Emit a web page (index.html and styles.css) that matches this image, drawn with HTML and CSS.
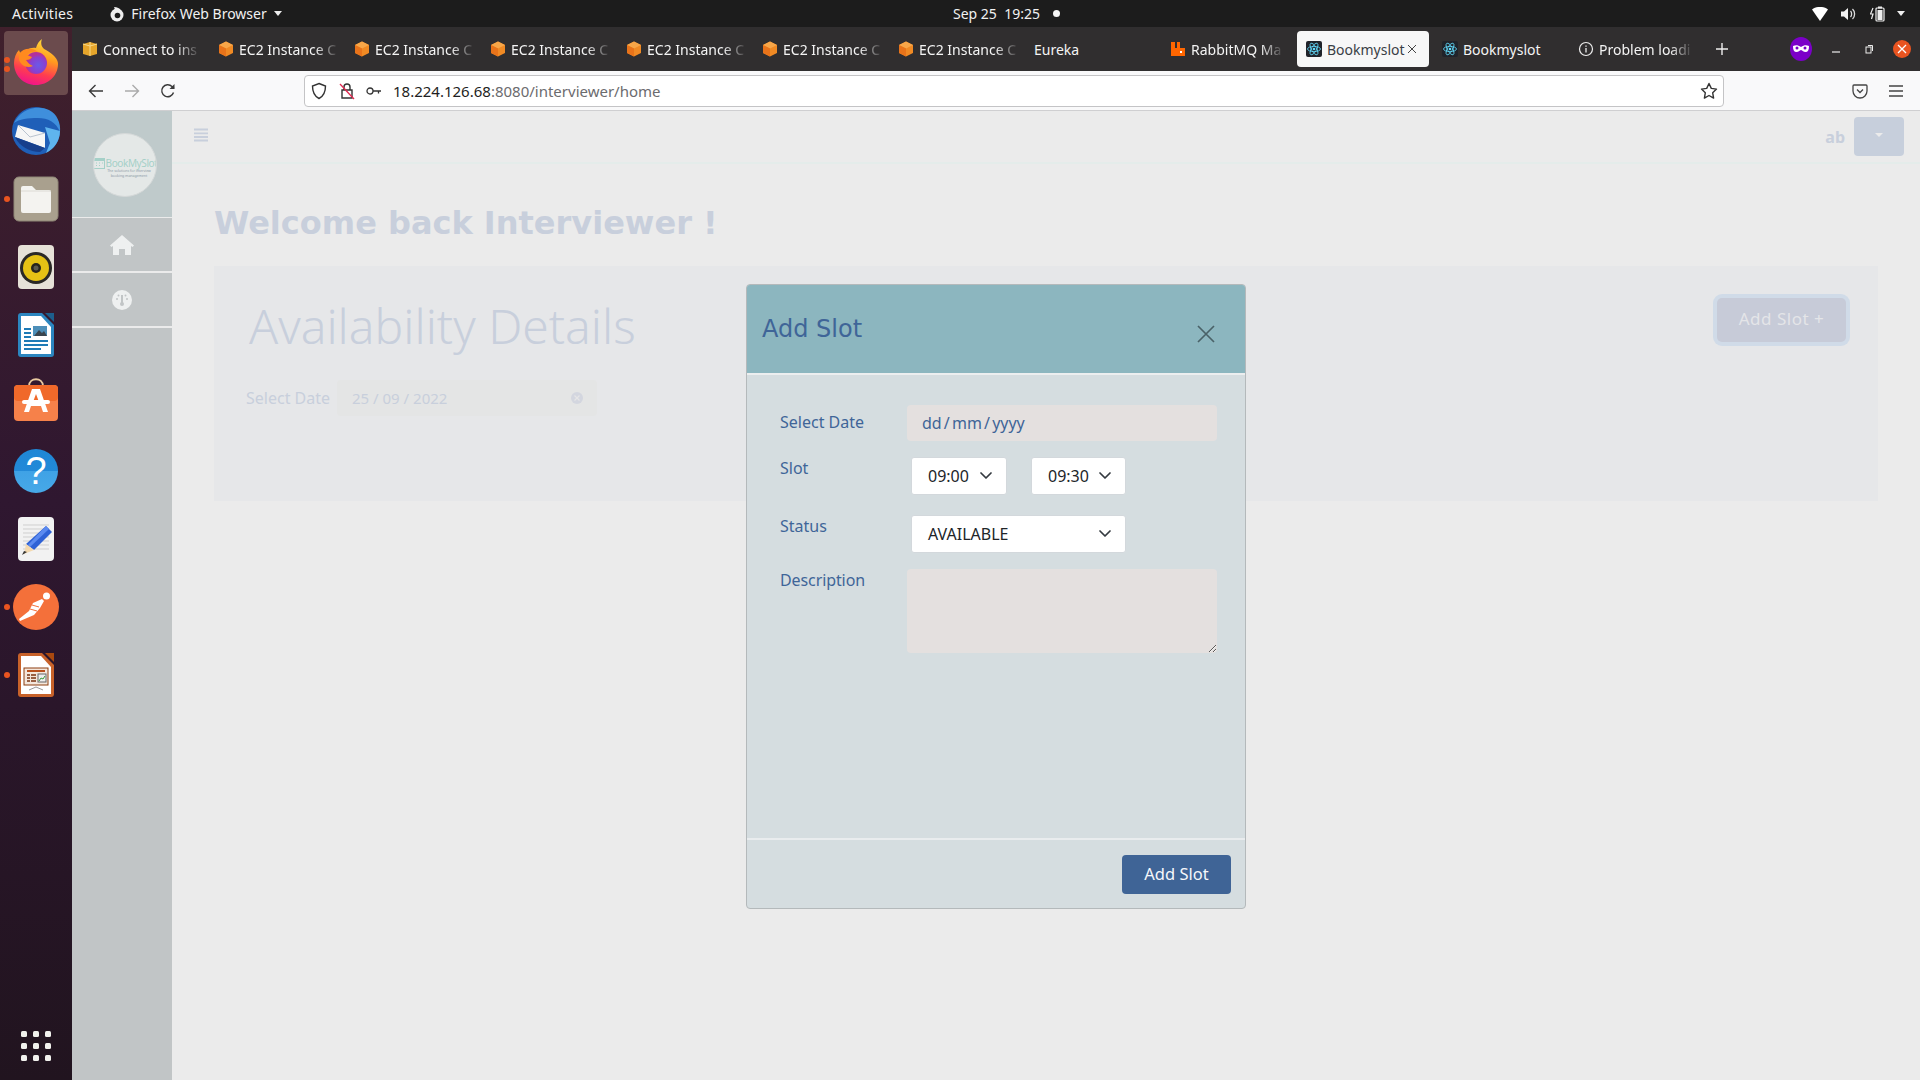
FILE: index.html
```html
<!DOCTYPE html>
<html lang="en">
<head>
<meta charset="utf-8">
<title>Bookmyslot</title>
<link rel="stylesheet" href="styles.css">
</head>
<body>
<svg class="defs" width="0" height="0">
  <defs>
    <g id="cube"><path d="M8 0.5 15 4v8l-7 3.5L1 12V4z" fill="#f08a24"/><path d="M8 0.5 15 4 8 7.5 1 4z" fill="#f7a648"/><path d="M8 7.5V15.5L1 12V4z" fill="#e8731a"/></g>
    <g id="react"><rect width="16" height="16" rx="2" fill="#20232a"/><g fill="none" stroke="#61dafb" stroke-width=".8"><ellipse cx="8" cy="8" rx="6.5" ry="2.6"/><ellipse cx="8" cy="8" rx="6.5" ry="2.6" transform="rotate(60 8 8)"/><ellipse cx="8" cy="8" rx="6.5" ry="2.6" transform="rotate(120 8 8)"/></g><circle cx="8" cy="8" r="1.3" fill="#61dafb"/></g>
    <path id="chev" d="M1 1l5 5 5-5" fill="none" stroke="#343a40" stroke-width="1.7" stroke-linecap="round" stroke-linejoin="round"/>
  </defs>
</svg>
<div class="screen">
  <header class="topbar">
    <span class="activities">Activities</span>
    <span class="appmenu">
      <svg width="16" height="16" viewBox="0 0 16 16"><circle cx="8" cy="9" r="6.5" fill="#eee"/><circle cx="8.5" cy="9.5" r="2.8" fill="#1c1c1c"/><path d="M5 1c3 0 6 1 7 4L7 6z" fill="#eee"/></svg>
      Firefox Web Browser
      <i class="caret"></i>
    </span>
    <span class="clock">Sep 25&nbsp; 19:25<i class="clockdot"></i></span>
    <span class="tray">
      <svg width="16" height="14" viewBox="0 0 16 14"><path d="M0 2.500C4.500-1 11.500-1 16 2.500L8 14z" fill="#fff"/></svg>
      <svg width="16" height="14" viewBox="0 0 16 14"><path d="M0 4.500h3L7 1v12L3 9.500H0z" fill="#f2f2f2"/><path d="M9.500 4c1.500 1.500 1.500 4.500 0 6M11.500 2c2.800 2.500 2.800 7.500 0 10" fill="none" stroke="#ddd" stroke-width="1.300"/></svg>
      <svg width="16" height="16" viewBox="0 0 16 16"><path d="M3 2 0.500 8H3L1.500 13" fill="none" stroke="#eee" stroke-width="1.200"/><rect x="6" y="2" width="8" height="13" rx="1" fill="none" stroke="#eee" stroke-width="1.200"/><rect x="8" y="0.500" width="4" height="2" fill="#eee"/><rect x="7.500" y="4" width="5" height="10" fill="#eee"/></svg>
      <i class="caret tray-caret"></i>
    </span>
  </header>
  <div class="desktop">
    <nav class="dock">
      <div class="dock-item dock-active">
        <i class="run run-a"></i><i class="run run-b"></i>
        <svg width="64" height="64" viewBox="0 0 64 64"><defs><linearGradient id="ffa" x1="0.700" y1="0" x2="0.400" y2="1"><stop offset="0" stop-color="#ffe03d"/><stop offset=".4" stop-color="#ff9a1f"/><stop offset=".72" stop-color="#ff3d4f"/><stop offset="1" stop-color="#f0148a"/></linearGradient><radialGradient id="ffb" cx=".6" cy=".6"><stop offset="0" stop-color="#6a5ae8"/><stop offset=".7" stop-color="#8a3fd0"/><stop offset="1" stop-color="#b5309a"/></radialGradient></defs><path d="M38 8C36 13 38 17 42 19 50 24 54 28 54 33 54 45 44 54 32 54 19 54 10 44 10 32 10 27 12 22 15 19 16 22 17 23 18 24 21 19 26 16 32 17 33 13 35 10 38 8z" fill="url(#ffa)"/><circle cx="32" cy="32" r="11" fill="url(#ffb)"/><path d="M15 23C19 17 28 16 34 21 29 20 25 21 23 24L28 26C27 28 25 29 22 29 24 32 26 34 29 35 23 38 16 34 15 28z" fill="#ff8a1f"/></svg>
      </div>
      <div class="dock-item">
        <svg width="64" height="64" viewBox="0 0 64 64"><circle cx="32" cy="32" r="24" fill="#1f5fb8"/><path d="M10 24C16 11 32 5 45 11 53 15 57 24 56 33 52 23 44 19 34 19 24 19 15 20 10 24z" fill="#3f8fdc"/><path d="M41 28 56 32C56 42 50 50 42 54L46 44z" fill="#5fb4ee"/><path d="M14 26 41 34V49L11 38z" fill="#f6f6f6"/><path d="M14 26 26 38 41 34" fill="none" stroke="#b9c3cf" stroke-width="1"/><path d="M11 38 41 49 36 53C26 53 15 47 11 38z" fill="#173f8c"/></svg>
      </div>
      <div class="dock-item">
        <i class="run run-one"></i>
        <svg width="64" height="64" viewBox="0 0 64 64"><rect x="10" y="10" width="44" height="44" rx="5" fill="#a9a08e" stroke="#8f8777"/><path d="M17 21a2 2 0 0 1 2-2h9l4 4h13a2 2 0 0 1 2 2v19a2 2 0 0 1-2 2H19a2 2 0 0 1-2-2z" fill="#f4f3f0"/><path d="M17 24h30" stroke="#dcdad4"/></svg>
      </div>
      <div class="dock-item">
        <svg width="64" height="64" viewBox="0 0 64 64"><rect x="14" y="10" width="36" height="44" rx="4" fill="#e6e2d8"/><circle cx="32" cy="33" r="16" fill="#2a2926"/><circle cx="32" cy="33" r="13" fill="#e5c215"/><circle cx="32" cy="33" r="5" fill="#26241d"/><circle cx="32" cy="33" r="2.500" fill="#5b5a50"/></svg>
      </div>
      <div class="dock-item">
        <svg width="64" height="64" viewBox="0 0 64 64"><path d="M41 10h9v9z" fill="#1d5e8c"/><path d="M17 10h21l12 12v29a3 3 0 0 1-3 3H17a3 3 0 0 1-3-3V13a3 3 0 0 1 3-3z" fill="#2b86c0"/><path d="M17 13h20l10 11v27H17z" fill="#fff"/><path d="M20 26h7M20 30h7M20 34h7M20 38h24M20 42h24M20 46h17" stroke="#1f7bb6" stroke-width="2"/><rect x="29" y="23" width="14" height="10" fill="#4d8fb9"/><path d="M30 33l5-6 3 3 2-2 3 5z" fill="#39454f"/></svg>
      </div>
      <div class="dock-item">
        <svg width="64" height="64" viewBox="0 0 64 64"><path d="M25 15c0-9 14-9 14 0" fill="none" stroke="#e8c9a0" stroke-width="1.800"/><rect x="10" y="14" width="44" height="36" rx="4" fill="#f6814a"/><rect x="10" y="14" width="44" height="16" rx="4" fill="#f0692a"/><path d="M28 18h8l8 23h-5l-2-6H27l-2 6h-5zm4 5-3 8h6z" fill="#fff"/><rect x="18" y="29" width="28" height="4" rx="2" fill="#fff"/></svg>
      </div>
      <div class="dock-item">
        <svg width="64" height="64" viewBox="0 0 64 64"><defs><linearGradient id="hp" x1="0" y1="0" x2="0" y2="1"><stop offset="0" stop-color="#1f87d6"/><stop offset=".5" stop-color="#2289d8"/><stop offset=".5" stop-color="#3fa2e6"/><stop offset="1" stop-color="#47a9e8"/></linearGradient></defs><circle cx="32" cy="32" r="22" fill="url(#hp)"/><text class="help-q" x="32" y="45" text-anchor="middle">?</text></svg>
      </div>
      <div class="dock-item">
        <svg width="64" height="64" viewBox="0 0 64 64"><rect x="14" y="10" width="36" height="44" rx="4" fill="#f2f2f2"/><path d="M19 18h26M19 22h26M19 26h26M19 30h26M19 34h26M19 38h26M19 42h26" stroke="#cfcfcf"/><path d="M42 19l6 6-18 18-8-6z" fill="#2f62d6"/><path d="M42 19l3 3-19 18-2-2z" fill="#5b8af0"/><path d="M22 37l8 6-10 4z" fill="#f3d9b0"/><path d="M20 44l3 1-5 3z" fill="#333"/></svg>
      </div>
      <div class="dock-item">
        <i class="run run-one"></i>
        <svg width="64" height="64" viewBox="0 0 64 64"><circle cx="32" cy="32" r="23" fill="#f4703a"/><circle cx="42.500" cy="21" r="3.500" fill="#fff"/><path d="M38 24 29 28 25 36 15 44l1 2 14-6 6-7 4-7z" fill="#fff"/><path d="M28 30l7 2M26 34l7 2" stroke="#f4703a"/></svg>
      </div>
      <div class="dock-item">
        <i class="run run-one"></i>
        <svg width="64" height="64" viewBox="0 0 64 64"><path d="M41 10h9v9z" fill="#a9490f"/><path d="M17 10h21l12 12v29a3 3 0 0 1-3 3H17a3 3 0 0 1-3-3V13a3 3 0 0 1 3-3z" fill="#c8622a"/><path d="M17 13h20l10 11v27H17z" fill="#fff"/><rect x="20" y="25" width="24" height="17" fill="#f4e7dc" stroke="#8d3f10"/><path d="M23 28h18" stroke="#b8501c" stroke-width="2"/><path d="M23 32h3M23 35h3M23 38h3M27 32h5M27 35h5M27 38h5" stroke="#7a3410" stroke-width="1.500"/><rect x="34" y="31" width="8" height="8" fill="#eee" stroke="#666"/><path d="M35 38l2-3 2 1 2-3" stroke="#3a9b3a" fill="none"/><path d="M25 47l7-3 7 3" fill="none" stroke="#999"/></svg>
      </div>
      <div class="apps-grid"><i></i><i></i><i></i><i></i><i></i><i></i><i></i><i></i><i></i></div>
    </nav>
    <main class="window">
      <div class="tabstrip">
        <div class="tab"><svg width="16" height="16" viewBox="0 0 16 16"><path d="M8 1 15 3v10l-7 2-7-2V3z" fill="#e5a52b"/><path d="M8 1v14" stroke="#f7d98a"/><path d="M1 3l7 2 7-2" fill="none" stroke="#f7d98a"/></svg><span class="tab-label">Connect to ins</span></div>
        <div class="tab"><svg width="16" height="16" viewBox="0 0 16 16"><use href="#cube"/></svg><span class="tab-label">EC2 Instance C</span></div>
        <div class="tab"><svg width="16" height="16" viewBox="0 0 16 16"><use href="#cube"/></svg><span class="tab-label">EC2 Instance C</span></div>
        <div class="tab"><svg width="16" height="16" viewBox="0 0 16 16"><use href="#cube"/></svg><span class="tab-label">EC2 Instance C</span></div>
        <div class="tab"><svg width="16" height="16" viewBox="0 0 16 16"><use href="#cube"/></svg><span class="tab-label">EC2 Instance C</span></div>
        <div class="tab"><svg width="16" height="16" viewBox="0 0 16 16"><use href="#cube"/></svg><span class="tab-label">EC2 Instance C</span></div>
        <div class="tab"><svg width="16" height="16" viewBox="0 0 16 16"><use href="#cube"/></svg><span class="tab-label">EC2 Instance C</span></div>
        <div class="tab"><span class="tab-plain">Eureka</span></div>
        <div class="tab"><svg width="16" height="16" viewBox="0 0 16 16"><path d="M1 1h4v6h2V1h3v6h5v8H1z" fill="#f60"/><rect x="10" y="10" width="2" height="2" fill="#fff"/></svg><span class="tab-label">RabbitMQ Ma</span></div>
        <div class="tab tab-active"><svg width="16" height="16" viewBox="0 0 16 16"><use href="#react"/></svg><span class="tab-plain">Bookmyslot</span><svg class="tab-x" width="10" height="10" viewBox="0 0 10 10"><path d="M1 1l8 8M9 1l-8 8" stroke="#444" stroke-width="1"/></svg></div>
        <div class="tab"><svg width="16" height="16" viewBox="0 0 16 16"><use href="#react"/></svg><span class="tab-plain">Bookmyslot</span></div>
        <div class="tab"><svg width="16" height="16" viewBox="0 0 16 16"><circle cx="8" cy="8" r="6.500" fill="none" stroke="#eee" stroke-width="1.200"/><path d="M8 7v4.500M8 4.500v1.300" stroke="#eee" stroke-width="1.300"/></svg><span class="tab-label">Problem loadi</span></div>
        <svg class="newtab" width="14" height="14" viewBox="0 0 14 14"><path d="M7 1v12M1 7h12" stroke="#eee" stroke-width="1.400"/></svg>
        <span class="win-controls">
          <svg width="22" height="24" viewBox="0 0 22 24"><ellipse cx="11" cy="12" rx="11" ry="12" fill="#7b00c8"/><path d="M3 9c3-1.500 5-1 8 1 3-2 5-2.500 8-1 0 4-1 6-3.500 6-2 0-3-1.500-4.500-2-1.500.5-2.500 2-4.500 2C4 15 3 13 3 9z" fill="#fff"/><circle cx="7" cy="11" r="1.500" fill="#7b00c8"/><circle cx="15" cy="11" r="1.500" fill="#7b00c8"/></svg>
          <svg class="wc-min" width="10" height="10" viewBox="0 0 10 10"><path d="M1 8h8" stroke="#eee" stroke-width="1.200"/></svg>
          <svg class="wc-max" width="10" height="10" viewBox="0 0 10 10"><rect x="2" y="3" width="5" height="6" fill="none" stroke="#eee"/><path d="M4 1.500h4.500v5.500" fill="none" stroke="#eee"/></svg>
          <span class="wc-close"><svg width="10" height="10" viewBox="0 0 10 10"><path d="M1 1l8 8M9 1l-8 8" stroke="#fff" stroke-width="1.300"/></svg></span>
        </span>
      </div>
      <div class="navbar">
        <span class="nav-btn"><svg width="16" height="16" viewBox="0 0 16 16"><path d="M15 8H1.500M7.500 2 1.500 8l6 6" fill="none" stroke="#3a3a3a" stroke-width="1.400"/></svg></span>
        <span class="nav-btn"><svg width="16" height="16" viewBox="0 0 16 16"><path d="M1 8h13.500M8.500 2l6 6-6 6" fill="none" stroke="#aaa" stroke-width="1.400"/></svg></span>
        <span class="nav-btn"><svg width="16" height="16" viewBox="0 0 16 16"><path d="M13.500 9.500A6 6 0 1 1 12 3.500L14 5.500" fill="none" stroke="#3a3a3a" stroke-width="1.400"/><path d="M14.500 1v5h-5z" fill="#3a3a3a"/></svg></span>
        <div class="urlbar">
          <svg class="url-shield" width="16" height="18" viewBox="0 0 16 18"><path d="M8 1.500 14.500 4c0 6-1.500 10-6.500 12.500C3 14 1.500 10 1.500 4z" fill="none" stroke="#333" stroke-width="1.400"/></svg>
          <svg class="url-lock" width="16" height="18" viewBox="0 0 16 18"><path d="M3 8h10v8H3zM5 8V5a3 3 0 0 1 6 0v3" fill="none" stroke="#333" stroke-width="1.400"/><path d="M1 2l14 15" stroke="#e22850" stroke-width="1.300"/></svg>
          <svg class="url-key" width="16" height="10" viewBox="0 0 16 10"><circle cx="4" cy="5" r="3" fill="none" stroke="#333" stroke-width="1.300"/><path d="M7 5h8M12.500 5v2.500" stroke="#333" stroke-width="1.300"/></svg>
          <span class="url-text"><b>18.224.126.68</b>:8080/interviewer/home</span>
          <svg class="url-star" width="18" height="18" viewBox="0 0 18 18"><path d="M9 1.500l2.300 4.900 5.200.7-3.800 3.700.9 5.300L9 13.500l-4.600 2.600.9-5.300L1.500 7.100l5.200-.7z" fill="none" stroke="#333" stroke-width="1.400" stroke-linejoin="round"/></svg>
        </div>
        <svg class="nav-pocket" width="16" height="16" viewBox="0 0 16 16"><path d="M2 2h12a1 1 0 0 1 1 1v5a7 7 0 0 1-14 0V3a1 1 0 0 1 1-1z" fill="none" stroke="#444" stroke-width="1.300"/><path d="M5 6.500l3 3 3-3" fill="none" stroke="#444" stroke-width="1.300"/></svg>
        <svg class="nav-menu" width="14" height="12" viewBox="0 0 14 12"><path d="M0 1h14M0 6h14M0 11h14" stroke="#444" stroke-width="1.300"/></svg>
      </div>
      <div class="page">
        <aside class="sidebar">
          <div class="side-logo">
            <div class="logo-circle">
              <span class="logo-row">
                <svg width="12" height="11" viewBox="0 0 12 11"><rect x=".5" y=".5" width="11" height="10" fill="none" stroke="#a5d0c8"/><rect x="1" y="1" width="10" height="2" fill="#a5d0c8"/><path d="M3 5h1M6 5h1M9 5h1M3 7.500h1M6 7.500h1" stroke="#a5d0c8"/></svg>
                <span class="logo-name">BookMySlot</span>
              </span>
              <span class="logo-sub">The solutions for interview<br>booking management</span>
            </div>
          </div>
          <div class="side-item"><svg width="24" height="20" viewBox="0 0 24 20"><path d="M12 0 24 10.500l-1.500 1.500L21 11v9h-6v-6H9v6H3v-9l-1.500 1L0 10.500z" fill="#eef0f0"/></svg></div>
          <div class="side-item"><svg width="20" height="20" viewBox="0 0 20 20"><circle cx="10" cy="10" r="10" fill="#eef0f0"/><path d="M10 5v8" stroke="#c1c5c6" stroke-width="2"/><circle cx="10" cy="14" r="2" fill="#c1c5c6"/><circle cx="5" cy="9" r="1" fill="#c1c5c6"/><circle cx="15" cy="9" r="1" fill="#c1c5c6"/><circle cx="6.500" cy="5.500" r="1" fill="#c1c5c6"/><circle cx="13.500" cy="5.500" r="1" fill="#c1c5c6"/></svg></div>
        </aside>
        <section class="content">
          <div class="appbar">
            <svg class="burger" width="14" height="14" viewBox="0 0 14 14"><path d="M0 1.500h14M0 5.300h14M0 9h14M0 12.500h14" stroke="#c8cfdc" stroke-width="1.800"/></svg>
            <span class="user">ab</span>
            <span class="user-btn"><i></i></span>
          </div>
          <div class="main-body">
            <h2 class="welcome">Welcome back Interviewer !</h2>
            <div class="card">
              <div class="card-left">
                <h1 class="card-title">Availability Details</h1>
                <div class="filter">
                  <span class="filter-label">Select Date</span>
                  <span class="filter-input">25 / 09 / 2022
                    <svg width="12" height="12" viewBox="0 0 12 12"><circle cx="6" cy="6" r="6" fill="#d3d6df"/><path d="M3.500 3.500l5 5M8.500 3.500l-5 5" stroke="#e5e5e6" stroke-width="1.300"/></svg>
                  </span>
                </div>
              </div>
              <button class="add-btn" type="button">Add Slot +</button>
            </div>
          </div>
        </section>
        <div class="modal">
          <div class="modal-head">
            <h3 class="modal-title">Add Slot</h3>
            <svg class="modal-close" width="18" height="18" viewBox="0 0 18 18"><path d="M1 1l16 16M17 1 1 17" stroke="#4a6268" stroke-width="1.700"/></svg>
          </div>
          <div class="modal-body">
            <div class="row row-date">
              <span class="label">Select Date</span>
              <span class="date-field">dd / mm / yyyy</span>
            </div>
            <div class="row row-slot">
              <span class="label">Slot</span>
              <span class="select select-time">09:00<svg width="12" height="7" viewBox="0 0 12 7"><use href="#chev"/></svg></span>
              <span class="select select-time select-end">09:30<svg width="12" height="7" viewBox="0 0 12 7"><use href="#chev"/></svg></span>
            </div>
            <div class="row row-status">
              <span class="label">Status</span>
              <span class="select select-wide">AVAILABLE<svg width="12" height="7" viewBox="0 0 12 7"><use href="#chev"/></svg></span>
            </div>
            <div class="row row-desc">
              <span class="label">Description</span>
              <textarea class="desc" aria-label="Description"></textarea>
            </div>
          </div>
          <div class="modal-foot"><button class="modal-submit" type="button">Add Slot</button></div>
        </div>
      </div>
    </main>
  </div>
</div>
</body>
</html>
```
FILE: styles.css
```css
* { box-sizing: border-box; }
html, body { margin: 0; height: 100%; overflow: hidden; }
body { font-family: "Noto Sans", "Open Sans", sans-serif; background: #ebebeb; }
i { display: block; font-style: normal; }
.defs { position: absolute; }
.screen { display: flex; flex-direction: column; width: 1920px; height: 1080px; }

.topbar { height: 27px; background: #1c1c1c; color: #f1f1f1; font-size: 14px; display: flex; align-items: center; position: relative; flex: none; }
.activities { margin-left: 12px; letter-spacing: 0.300px; }
.appmenu { margin-left: 36px; display: flex; align-items: center; gap: 6px; }
.caret { width: 0; height: 0; border: 4.500px solid transparent; border-top: 5px solid #eee; border-bottom: 0; margin-left: 1px; }
.clock { position: absolute; left: 953px; display: flex; align-items: center; }
.clockdot { width: 7px; height: 7px; border-radius: 50%; background: #f5f5f5; margin-left: 13px; }
.tray { margin-left: auto; margin-right: 15px; display: flex; align-items: center; gap: 13px; }
.tray-caret { margin-left: -2px; }

.desktop { flex: 1; display: flex; min-height: 0; }
.dock { width: 72px; flex: none; display: flex; flex-direction: column; padding-top: 2px; background: linear-gradient(180deg, #40202c 0%, #2f1730 45%, #21141f 100%); }
.dock-item { height: 68px; display: flex; align-items: center; justify-content: center; position: relative; flex: none; }
.dock-active::before { content: ""; position: absolute; left: 4px; top: 2px; width: 64px; height: 64px; border-radius: 4px; background: #6b4b4d; }
.dock-item svg { position: relative; }
.help-q { font-family: "Liberation Sans", sans-serif; font-size: 38px; fill: #fff; }
.run { position: absolute; left: 4px; width: 6px; height: 6px; border-radius: 50%; background: #e95420; z-index: 1; }
.run-a { top: 28px; }
.run-b { top: 37px; }
.run-one { top: 31px; }
.apps-grid { margin-top: auto; margin-bottom: 19px; margin-left: 21px; display: grid; grid-template-columns: repeat(3, 6px); gap: 6px; }
.apps-grid i { width: 6px; height: 6px; border-radius: 1.500px; background: #f1f1ed; }

.window { flex: 1; min-width: 0; display: flex; flex-direction: column; }
.tabstrip { height: 44px; flex: none; background: #302e2f; display: flex; align-items: center; position: relative; }
.tab { width: 136px; height: 36px; flex: none; display: flex; align-items: center; gap: 5px; padding-left: 10px; color: #f4f4f4; font-size: 14px; white-space: nowrap; }
.tab svg { flex: none; }
.tab-label { -webkit-mask-image: linear-gradient(90deg, #000 78%, rgba(0, 0, 0, 0.150) 100%); mask-image: linear-gradient(90deg, #000 78%, rgba(0, 0, 0, 0.150) 100%); }
.tab-plain { flex: none; }
.tab-active { width: 132px; margin: 0 2px 0 1px; padding-left: 9px; background: #f7f7f7; color: #3a3f46; border-radius: 4px; }
.tab-x { margin-left: -3px; }
.tab-active + .tab { margin-left: 1px; }
.newtab { margin-left: 11px; flex: none; }
.win-controls { margin-left: auto; display: flex; align-items: center; }
.win-controls > svg:first-child { margin-right: 19px; }
.wc-min { margin-right: 23px; }
.wc-max { margin-right: 19px; }
.wc-close { width: 18px; height: 18px; border-radius: 50%; background: #e95420; display: flex; align-items: center; justify-content: center; margin-right: 9px; }

.navbar { height: 40px; flex: none; background: #f9f9fa; border-bottom: 1px solid #cfcfd1; display: flex; align-items: center; padding-left: 6px; position: relative; }
.nav-btn { width: 36px; display: flex; justify-content: center; flex: none; }
.urlbar { margin-left: 118px; width: 1420px; height: 32px; flex: none; background: #fff; border: 1px solid #c4c4c6; border-radius: 4px; display: flex; align-items: center; padding-left: 6px; }
.url-lock { margin-left: 12px; }
.url-key { margin-left: 11px; }
.url-text { margin-left: 11px; font-size: 15px; color: #6b6b6e; }
.url-text b { font-weight: 400; color: #1e1e22; }
.url-star { margin-left: auto; margin-right: 5px; }
.nav-pocket { margin-left: 128px; }
.nav-menu { margin-left: 21px; }

.page { flex: 1; min-height: 0; display: flex; position: relative; }
.sidebar { width: 100px; flex: none; background: #c1c5c6; }
.side-logo { height: 107px; background: #bfcacb; border-bottom: 1px solid #ebebeb; display: flex; align-items: center; justify-content: center; padding: 2px 0 0 6px; }
.logo-circle { width: 64px; height: 64px; flex: none; border-radius: 50%; background: #e4e8e7; border: 1px solid #d5d9d9; display: flex; flex-direction: column; align-items: center; justify-content: center; padding-top: 5px; overflow: hidden; }
.logo-row { display: flex; align-items: center; gap: 1px; }
.logo-name { font-size: 10px; line-height: 12px; color: #a5d0c8; letter-spacing: -0.400px; }
.logo-sub { font-size: 3.500px; line-height: 4.500px; color: #8b9aa6; text-align: center; margin-left: 8px; }
.side-item { height: 55px; border-bottom: 2px solid #ebebeb; display: flex; align-items: center; justify-content: center; }

.content { flex: 1; min-width: 0; display: flex; flex-direction: column; }
.appbar { height: 53px; flex: none; border-bottom: 2px solid #e4ecea; display: flex; align-items: center; padding: 0 16px 0 22px; }
.burger { margin-bottom: 4px; }
.user { margin-left: auto; font-size: 16px; font-weight: 700; color: #c8cfdc; margin-right: 9px; }
.user-btn { width: 50px; height: 39px; border-radius: 4px; background: #c7cfdc; display: flex; align-items: center; justify-content: center; }
.user-btn i { width: 0; height: 0; border: 4px solid transparent; border-top: 4px solid #ebebeb; border-bottom: 0; margin-bottom: 4px; }
.main-body { padding: 0 42px; }
.welcome { margin: 40px 0 0; height: 62px; font: 700 32px/38px "DejaVu Sans", sans-serif; color: #c8cfdc; }
.card { height: 235px; background: #e6e7e9; display: flex; justify-content: space-between; align-items: flex-start; padding: 29px 32px 0 29px; }
.card-left { display: flex; flex-direction: column; }
.card-title { margin: 0 0 0 6px; font: 300 48px/62px "Noto Sans", sans-serif; color: #c8cfdc; }
.filter { display: flex; align-items: center; margin-top: 23px; margin-left: 3px; font-size: 15px; color: #c8cfdc; }
.filter-label { width: 91px; font-size: 16px; }
.filter-input { width: 260px; height: 36px; background: #e4e5e5; display: flex; align-items: center; justify-content: space-between; padding: 0 14px 0 15px; border-radius: 4px; }
.add-btn { width: 129px; height: 44px; margin-top: 3px; padding: 0 0 4px; border: 0; border-radius: 5px; box-shadow: 0 0 0 4px #d0dbe8; background: #c7cbd8; color: #e4e5e8; font: 17px "Noto Sans", sans-serif; letter-spacing: 0.500px; }

.modal { position: absolute; left: 674px; top: 173px; width: 500px; height: 625px; background: #d5dde0; border: 1px solid #b4b9bb; border-radius: 4px; display: flex; flex-direction: column; overflow: hidden; }
.modal-head { height: 90px; flex: none; background: #8cb6bf; border-bottom: 2px solid #eceeef; display: flex; align-items: flex-start; justify-content: space-between; padding: 28px 13px 0 15px; }
.modal-title { margin: 0; font: 400 24px/32px "DejaVu Sans", sans-serif; color: #3f6598; }
.modal-close { margin-top: 12px; margin-right: 17px; }
.modal-body { flex: 1; padding: 30px 28px 0 33px; display: flex; flex-direction: column; }
.row { display: flex; align-items: flex-start; }
.label { width: 127px; flex: none; font-size: 16px; line-height: 20px; color: #3f6598; }
.row-date { align-items: center; }
.row-date .label { padding-bottom: 2px; }
.date-field { width: 310px; height: 36px; background: #e4e0df; border-radius: 4px; display: flex; align-items: center; padding: 0 0 1px 15px; font-size: 16px; word-spacing: -2px; color: #3f6598; }
.row-slot .label, .row-status .label { padding-top: 1px; }
.row-slot { margin-top: 16px; }
.row-status { margin-top: 20px; }
.row-desc { margin-top: 16px; }
.row-desc .label { padding-top: 1px; letter-spacing: -0.100px; }
.select { height: 38px; margin-left: 4px; background: #fff; border: 1px solid #d3d8dc; border-radius: 3px; display: flex; align-items: center; justify-content: space-between; padding: 0 14px 1px 16px; font-size: 16px; color: #212529; }
.select-time { width: 96px; }
.select-end { margin-left: 24px; width: 95px; }
.select-wide { width: 215px; }
.desc { width: 310px; height: 84px; background: #e4e0df; border: 0; border-radius: 4px; display: block; margin: 0; resize: both; outline: none; }
.modal-foot { height: 70px; flex: none; border-top: 2px solid #e9ecee; display: flex; justify-content: flex-end; padding: 15px 14px 0 0; }
.modal-submit { width: 109px; height: 39px; padding: 0 0 2px; background: #3f6496; color: #f5f7fa; border: 0; border-radius: 4px; font: 16.500px "Noto Sans", sans-serif; }
```
